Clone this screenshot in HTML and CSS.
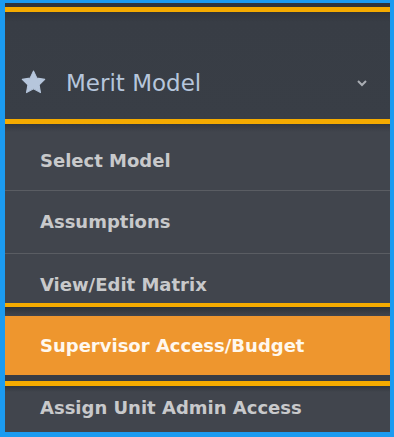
FILE: index.html
```html
<!DOCTYPE html>
<html>
<head>
<meta charset="utf-8">
<link rel="stylesheet" href="styles.css">
</head>
<body>
<div class="frame">
  <div class="gap-top"></div>
  <div class="rule"></div>
  <div class="header">
    <svg class="star" width="25" height="25" viewBox="0 0 24 24"><path d="M12 1l3.3 6.8 7.5 1.1-5.4 5.3 1.3 7.5L12 18.1l-6.7 3.6 1.3-7.5-5.4-5.3 7.5-1.1z" fill="#b6c6dc" stroke="#b6c6dc" stroke-width="1" stroke-linejoin="round"/></svg>
    <span class="title">Merit Model</span>
    <svg class="chev" width="12" height="8" viewBox="0 0 12 8"><path d="M2 2l4 4 4-4" fill="none" stroke="#a9adb3" stroke-width="2"/></svg>
  </div>
  <div class="rule"></div>
  <div class="item i1">Select Model</div>
  <div class="sep"></div>
  <div class="item i2">Assumptions</div>
  <div class="sep"></div>
  <div class="item i3">View/Edit Matrix</div>
  <div class="rule thin"></div>
  <div class="gap g1"></div>
  <div class="item active">Supervisor Access/Budget</div>
  <div class="gap g2"></div>
  <div class="rule"></div>
  <div class="item last">Assign Unit Admin Access</div>
</div>
</body>
</html>
```
FILE: styles.css
```css
html, body { margin: 0; padding: 0; background: #1b9bf1; }
.frame {
  width: 394px;
  height: 437px;
  box-sizing: border-box;
  border-style: solid;
  border-color: #1b9bf1;
  border-width: 3px 4px 5px 5px;
  background: #41454d;
  display: flex;
  flex-direction: column;
  overflow: hidden;
  box-shadow: inset -1px 0 0 #5b5f66, inset 1px 0 0 #2f343b;
  font-family: "DejaVu Sans", Verdana, sans-serif;
}
.gap-top { height: 4px; background: #30353c; flex: none; }
.rule { height: 5px; background: #f5ab00; flex: none; box-shadow: 0 1px 0 #6a5a30; }
.rule.thin { height: 4px; }
.header {
  height: 107px;
  flex: none;
  box-sizing: border-box;
  background: linear-gradient(#30353c 0px, #383d45 10px, #393e46 100%);
  display: flex;
  align-items: flex-end;
  padding: 0 20px 22px 16px;
}
.star { flex: none; margin: 0 20px 2px 0; }
.title {
  color: #b6c6dc;
  font-size: 23px;
  line-height: 28px;
  flex: 1;
}
.chev { flex: none; margin: 0 2px 10px 0; }
.item {
  flex: none;
  box-sizing: border-box;
  font-weight: bold;
  font-size: 18px;
  line-height: 24px;
  color: #c8c9cb;
  padding-left: 35px;
  background: #41454d;
}
.i1 { height: 66px; padding-top: 25px; background: linear-gradient(#33383f 0px, #41454d 8px); }
.i2 { height: 62px; padding-top: 19px; }
.i3 { height: 49px; padding-top: 19px; }
.sep { height: 1px; background: #5a5d63; flex: none; }
.gap { flex: none; background: #383c44; }
.g1 { height: 9px; background: linear-gradient(#2d3239, #41454d); }
.g2 { height: 6px; }
.item.active {
  height: 59px;
  padding-top: 18px;
  background: #ee962e;
  color: #fff8ee;
}
.item.last { height: 46px; padding-top: 10px; background: linear-gradient(#30353c 0px, #41454d 6px); }
```
